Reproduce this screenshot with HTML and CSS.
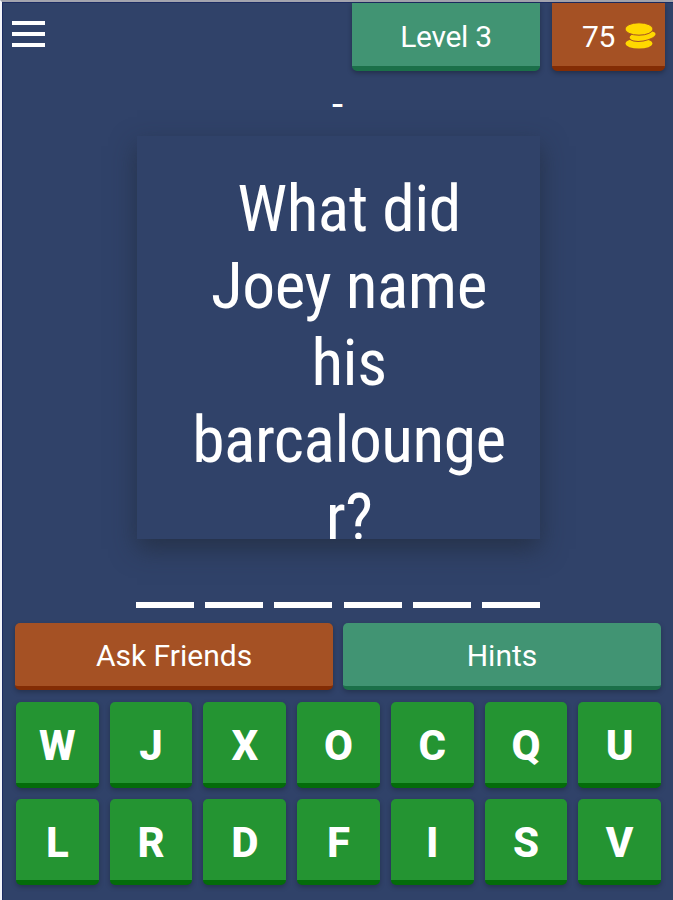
FILE: index.html
```html
<!DOCTYPE html>
<html lang="en">
<head>
    <meta charset="UTF-8">
    <meta name="viewport" content="width=device-width, initial-scale=1.0">
    <title>Trivia - Level 3</title>
    <link rel="stylesheet" href="styles.css">
</head>
<body>
<div class="game">
    <header class="top-bar">
        <button class="menu-btn" aria-label="Menu">
            <span></span>
            <span></span>
            <span></span>
        </button>
        <div class="tab level">Level 3</div>
        <div class="tab coins">
            <span>75</span>
            <svg class="coin-icon" viewBox="0 0 32 28" width="32" height="28">
                <ellipse cx="14" cy="21.6" rx="13.4" ry="5" />
                <ellipse class="coin" cx="17.6" cy="13.8" rx="13.6" ry="5.2" transform="rotate(-9 17.6 13.8)" />
                <ellipse class="coin" cx="14" cy="7" rx="14" ry="6.2" />
            </svg>
        </div>
    </header>

    <div class="category">-</div>

    <div class="card">
        <p class="question">What did<br>Joey name<br>his<br>barcalounge<br>r?</p>
    </div>

    <div class="answer">
        <span></span>
        <span></span>
        <span></span>
        <span></span>
        <span></span>
        <span></span>
    </div>

    <div class="actions">
        <button class="action ask">Ask Friends</button>
        <button class="action hints">Hints</button>
    </div>

    <div class="keys">
        <button>W</button>
        <button>J</button>
        <button>X</button>
        <button>O</button>
        <button>C</button>
        <button>Q</button>
        <button>U</button>
        <button>L</button>
        <button>R</button>
        <button>D</button>
        <button>F</button>
        <button>I</button>
        <button>S</button>
        <button>V</button>
    </div>
</div>
</body>
</html>
```
FILE: styles.css
```css
* {
    box-sizing: border-box;
}

body {
    margin: 0;
    height: 900px;
    overflow: hidden;
    font-family: Roboto, Arial, sans-serif;
    color: #ffffff;
}

button {
    border: none;
    padding: 0;
    font-family: inherit;
    color: inherit;
    cursor: pointer;
}

.game {
    height: 900px;
    background: #304269;
    border-top: 2px solid #a3a4ae;
    border-left: 2px solid #f4f5fa;
    box-shadow: inset 1px 1px 0 #1c2c62;
}

.top-bar {
    display: flex;
    height: 69px;
    padding-right: 8px;
    padding-top: 1px;
}

.menu-btn {
    display: flex;
    flex-direction: column;
    gap: 7px;
    width: 33px;
    margin: 18px auto 0 10px;
    background: none;
}

.menu-btn span {
    width: 33px;
    height: 4px;
    background: #ffffff;
}

.tab {
    display: flex;
    justify-content: center;
    align-items: center;
    height: 68px;
    padding-top: 3px;
    border-radius: 0 0 5px 5px;
    font-size: 30px;
    letter-spacing: -0.3px;
    box-shadow: 0 2px 5px rgba(0, 0, 0, 0.3);
}

.level {
    width: 188px;
    margin-right: 12px;
    background: #419473;
    border-bottom: 5px solid #1b7049;
}

.coins {
    width: 113px;
    padding-left: 22px;
    gap: 10px;
    background: #a55124;
    border-bottom: 5px solid #832c04;
}

.coin-icon {
    fill: #ffd800;
}

.coin {
    stroke: #a55124;
    stroke-width: 1;
}

.category {
    height: 65px;
    padding-top: 10px;
    text-align: center;
    font-size: 40px;
    line-height: 47px;
}

.card {
    width: 403px;
    height: 403px;
    margin-left: 135px;
    padding: 34px 29px 0 50px;
    overflow: hidden;
    background: #304269;
    box-shadow: 0 10px 24px rgba(32, 42, 56, 0.65);
}

.question {
    margin: 0;
    font-size: 65.5px;
    font-stretch: 75%;
    line-height: 77px;
    letter-spacing: -0.5px;
    text-align: center;
}

.answer {
    display: flex;
    justify-content: space-between;
    width: 404px;
    margin: 63px 0 0 134px;
}

.answer span {
    width: 58px;
    height: 6px;
    background: #ffffff;
}

.actions {
    display: flex;
    gap: 10px;
    margin: 15px 12px 0 13px;
}

.action {
    flex: 1;
    height: 67px;
    padding-top: 2px;
    border-radius: 5px;
    font-size: 30px;
    box-shadow: 0 2px 5px rgba(0, 0, 0, 0.25);
}

.ask {
    background: #a55124;
    border-bottom: 4px solid #832c04;
}

.hints {
    background: #419473;
    border-bottom: 4px solid #1b7049;
}

.keys {
    display: grid;
    grid-template-columns: repeat(7, 1fr);
    gap: 11px;
    margin: 12px 12px 0 14px;
}

.keys button {
    height: 86px;
    padding-top: 5px;
    border-radius: 5px;
    background: #249432;
    border-bottom: 5px solid #046c0a;
    font-size: 42px;
    font-weight: 800;
    box-shadow: 0 2px 5px rgba(0, 0, 0, 0.25);
}
```
